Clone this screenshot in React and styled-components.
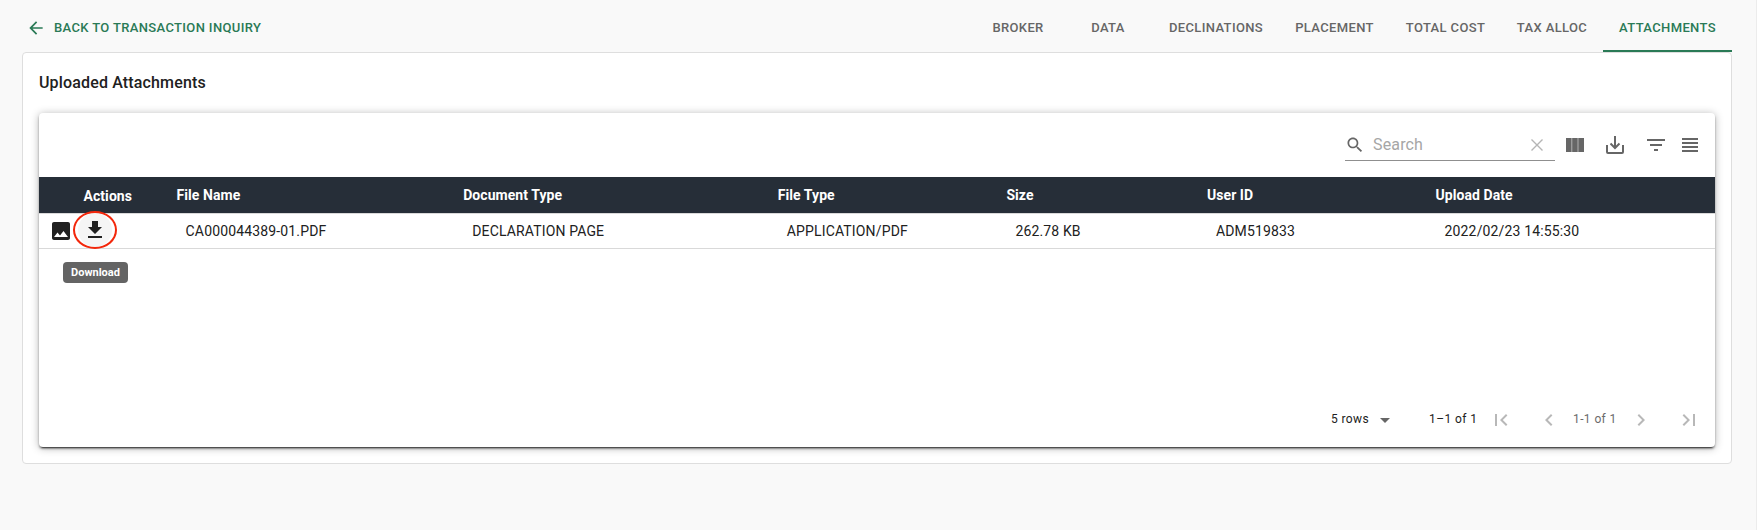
import React from "react";
import styled, { createGlobalStyle } from "styled-components";

const GlobalStyle = createGlobalStyle`
  *, *::before, *::after { box-sizing: border-box; }
  body {
    margin: 0;
    background: #f9f9f9;
    font-family: Roboto, "Liberation Sans", sans-serif;
    color: #212121;
  }
`;

const Page = styled.div`
  height: 530px;
  padding: 0 24px 0 22px;
  border-right: 1px solid #ececec;
`;

const TopBar = styled.header`
  display: flex;
  justify-content: space-between;
  height: 52px;
`;

const BackLink = styled.a`
  display: flex;
  align-items: center;
  gap: 8px;
  height: 55px;
  padding-left: 4px;
  color: #2a7a56;
  font-size: 13px;
  font-weight: 500;
  letter-spacing: 0.36px;
  white-space: nowrap;
`;

const Tabs = styled.nav`
  display: flex;
`;

const Tab = styled.button`
  width: ${(p) => p.$width}px;
  height: 52px;
  padding: 5px 0 0;
  border: 0;
  border-bottom: 2px solid ${(p) => (p.$active ? "#2a7a56" : "transparent")};
  background: none;
  color: ${(p) => (p.$active ? "#2a7a56" : "#666")};
  font: 500 13px Roboto, sans-serif;
  letter-spacing: 0.36px;
  white-space: nowrap;
`;

const Card = styled.main`
  height: 412px;
  padding: 16px 16px 0;
  background: #fff;
  border: 1px solid #dedede;
  border-radius: 4px;
`;

const Title = styled.h1`
  margin: 0 0 16px;
  height: 28px;
  font-size: 16px;
  line-height: 28px;
  font-weight: 500;
  letter-spacing: 0.15px;
`;

const Panel = styled.section`
  display: flex;
  flex-direction: column;
  height: 334px;
  background: #fff;
  border-radius: 4px;
  box-shadow: 0 3px 1px -2px rgba(0, 0, 0, 0.5), 0 2px 2px rgba(0, 0, 0, 0.34),
    0 1px 8px rgba(0, 0, 0, 0.3);
`;

const Toolbar = styled.div`
  display: flex;
  justify-content: flex-end;
  align-items: center;
  height: 64px;
  padding-right: 13px;
`;

const SearchField = styled.label`
  display: flex;
  align-items: center;
  width: 210px;
  height: 32px;
  margin-right: 8px;
  padding-right: 6px;
  border-bottom: 1px solid #8f8f8f;
  color: #a6a6a6;
  font-size: 16px;
  letter-spacing: 0.15px;
`;

const SearchText = styled.span`
  flex: 1;
  padding-left: 8px;
`;

const ToolButton = styled.span`
  display: flex;
  justify-content: center;
  width: 24px;
  margin-left: ${(p) => p.$gap || 0}px;
`;

const Icon = styled.svg`
  display: block;
  flex: none;
  width: ${(p) => p.$size || 24}px;
  height: ${(p) => p.$size || 24}px;
  fill: ${(p) => p.$color || "#666"};
`;

const Table = styled.div`
  flex: 1;
`;

const Row = styled.div`
  display: grid;
  grid-template-columns: 137.6px 286.6px 314.6px 228.6px 200.6px 228.6px 1fr;
  align-items: center;
`;

const HeadRow = styled(Row)`
  height: 36px;
  background: #262e38;
  color: #fff;
  font-size: 14px;
  font-weight: 700;
  letter-spacing: 0.06px;
`;

const HeadCell = styled.div`
  padding-left: ${(p) => p.$indent || 0}px;
  padding-top: ${(p) => p.$drop || 0}px;
  white-space: nowrap;
`;

const BodyRow = styled(Row)`
  height: 36px;
  border-top: 1px solid #d9d9d9;
  border-bottom: 1px solid #d9d9d9;
  font-size: 14px;
`;

const Cell = styled.div`
  padding-left: 9px;
  letter-spacing: 0.15px;
  white-space: nowrap;
`;

const Actions = styled.div`
  display: flex;
  align-items: center;
  padding-left: 10px;
`;

const DownloadAction = styled.div`
  position: relative;
  display: grid;
  place-items: center;
  width: 34px;
  height: 34px;
  margin-left: 5px;
  margin-top: -2px;
  background: #f5f5f5;
  border-radius: 50%;
`;

const Ring = styled.span`
  position: absolute;
  left: -5px;
  top: -2px;
  width: 44px;
  height: 38px;
  border: 2px solid #f3270b;
  border-radius: 50%;
`;

const Tooltip = styled.span`
  position: absolute;
  top: 49px;
  left: -15px;
  width: 65px;
  height: 21px;
  background: #646464;
  border-radius: 4px;
  color: #fff;
  font-size: 11px;
  font-weight: 700;
  line-height: 21px;
  text-align: center;
`;

const Pagination = styled.footer`
  display: flex;
  align-items: center;
  height: 56px;
  padding-right: 14px;
  justify-content: flex-end;
  font-size: 12px;
  letter-spacing: 0.4px;
  white-space: nowrap;
`;

const PageText = styled.span`
  width: ${(p) => p.$width}px;
  color: ${(p) => (p.$muted ? "#6b6b6b" : "#212121")};
`;

const PageIcon = styled.span`
  margin-right: ${(p) => p.$gap || 0}px;
  padding-top: 2px;
`;

const TABS = [
  ["BROKER", 90],
  ["DATA", 90],
  ["DECLINATIONS", 126],
  ["PLACEMENT", 111],
  ["TOTAL COST", 111],
  ["TAX ALLOC", 102],
  ["ATTACHMENTS", 129],
];

const COLUMNS = ["File Name", "Document Type", "File Type", "Size", "User ID", "Upload Date"];
const VALUES = [
  "CA000044389-01.PDF",
  "DECLARATION PAGE",
  "APPLICATION/PDF",
  "262.78 KB",
  "ADM519833",
  "2022/02/23 14:55:30",
];

const PATHS = {
  back: "M20 11H7.83l5.59-5.59L12 4l-8 8 8 8 1.41-1.41L7.83 13H20v-2z",
  search:
    "M15.5 14h-.79l-.28-.27C15.41 12.59 16 11.11 16 9.5 16 5.91 13.09 3 9.5 3S3 5.91 3 9.5 5.91 16 9.5 16c1.61 0 3.09-.59 4.23-1.57l.27.28v.79l5 4.99L20.49 19l-4.99-5zm-6 0C7.01 14 5 11.99 5 9.5S7.01 5 9.5 5 14 7.01 14 9.5 11.99 14 9.5 14z",
  columns: "M3 5h5.65v14H3zM9.150 5h5.600v14H9.150zM15.250 5H21v14h-5.750z",
  filter: "M10 18h4v-2h-4v2zM3 6v2h18V6H3zm3 7h12v-2H6v2z",
  density: "M4 15h16v-2H4v2zm0 4h16v-2H4v2zm0-8h16V9H4v2zm0-6v2h16V5H4z",
  image:
    "M21 19V5c0-1.1-.9-2-2-2H5c-1.1 0-2 .9-2 2v14c0 1.1.9 2 2 2h14c1.1 0 2-.9 2-2zM8.5 13.5l2.5 3.01L14.5 12l4.5 6H5l3.5-4.5z",
  download: "M5 20h14v-2H5v2zM19 9h-4V3H9v6H5l7 7 7-7z",
  caret: "M7 10l5 5 5-5z",
  first: "M18.41 16.59L13.82 12l4.59-4.59L17 6l-6 6 6 6zM6 6h2v12H6z",
  prev: "M15.41 7.41L14 6l-6 6 6 6 1.41-1.41L10.83 12z",
  next: "M10 6L8.59 7.41 13.17 12l-4.58 4.59L10 18l6-6z",
  last: "M5.59 7.41L10.18 12l-4.59 4.59L7 18l6-6-6-6zM16 6h2v12h-2z",
};

function Glyph({ name, size, color }) {
  return (
    <Icon viewBox="0 0 24 24" $size={size} $color={color}>
      <path d={PATHS[name]} />
    </Icon>
  );
}

export default function App() {
  return (
    <>
      <GlobalStyle />
      <Page>
        <TopBar>
          <BackLink>
            <Glyph name="back" size={20} color="#2a7a56" />
            BACK TO TRANSACTION INQUIRY
          </BackLink>
          <Tabs>
            {TABS.map(([label, width]) => (
              <Tab key={label} $width={width} $active={label === "ATTACHMENTS"}>
                {label}
              </Tab>
            ))}
          </Tabs>
        </TopBar>
        <Card>
          <Title>Uploaded Attachments</Title>
          <Panel>
            <Toolbar>
              <SearchField>
                <Glyph name="search" size={20} />
                <SearchText>Search</SearchText>
                <Icon viewBox="0 0 24 24">
                  <path d="M6.5 6.5l11 11m0-11l-11 11" stroke="#b5b5b5" strokeWidth="1.4" />
                </Icon>
              </SearchField>
              <ToolButton>
                <Glyph name="columns" />
              </ToolButton>
              <ToolButton $gap={16}>
                <Icon viewBox="0 0 24 24">
                  <path
                    d="M4 12v7q0 1 1 1h14q1 0 1-1v-7M12 3v12M7.5 10.5L12 15l4.5-4.5"
                    fill="none"
                    stroke="#666"
                    strokeWidth="2"
                  />
                </Icon>
              </ToolButton>
              <ToolButton $gap={17}>
                <Glyph name="filter" />
              </ToolButton>
              <ToolButton $gap={10}>
                <Glyph name="density" />
              </ToolButton>
            </Toolbar>
            <Table>
              <HeadRow>
                <HeadCell $indent={44.5} $drop={2}>Actions</HeadCell>
                {COLUMNS.map((c) => (
                  <HeadCell key={c}>{c}</HeadCell>
                ))}
              </HeadRow>
              <BodyRow>
                <Actions>
                  <Glyph name="image" color="#212121" />
                  <DownloadAction>
                    <Glyph name="download" color="#212121" />
                    <Ring />
                    <Tooltip>Download</Tooltip>
                  </DownloadAction>
                </Actions>
                {VALUES.map((v) => (
                  <Cell key={v}>{v}</Cell>
                ))}
              </BodyRow>
            </Table>
            <Pagination>
              <PageText $width={42}>5 rows</PageText>
              <PageIcon $gap={32}>
                <Glyph name="caret" />
              </PageIcon>
              <PageText $width={60}>1–1 of 1</PageText>
              <PageIcon $gap={24}>
                <Glyph name="first" color="#b8b8b8" />
              </PageIcon>
              <PageIcon $gap={12}>
                <Glyph name="prev" color="#b8b8b8" />
              </PageIcon>
              <PageText $width={56} $muted>1-1 of 1</PageText>
              <PageIcon $gap={24}>
                <Glyph name="next" color="#b8b8b8" />
              </PageIcon>
              <PageIcon>
                <Glyph name="last" color="#b8b8b8" />
              </PageIcon>
            </Pagination>
          </Panel>
        </Card>
      </Page>
    </>
  );
}
